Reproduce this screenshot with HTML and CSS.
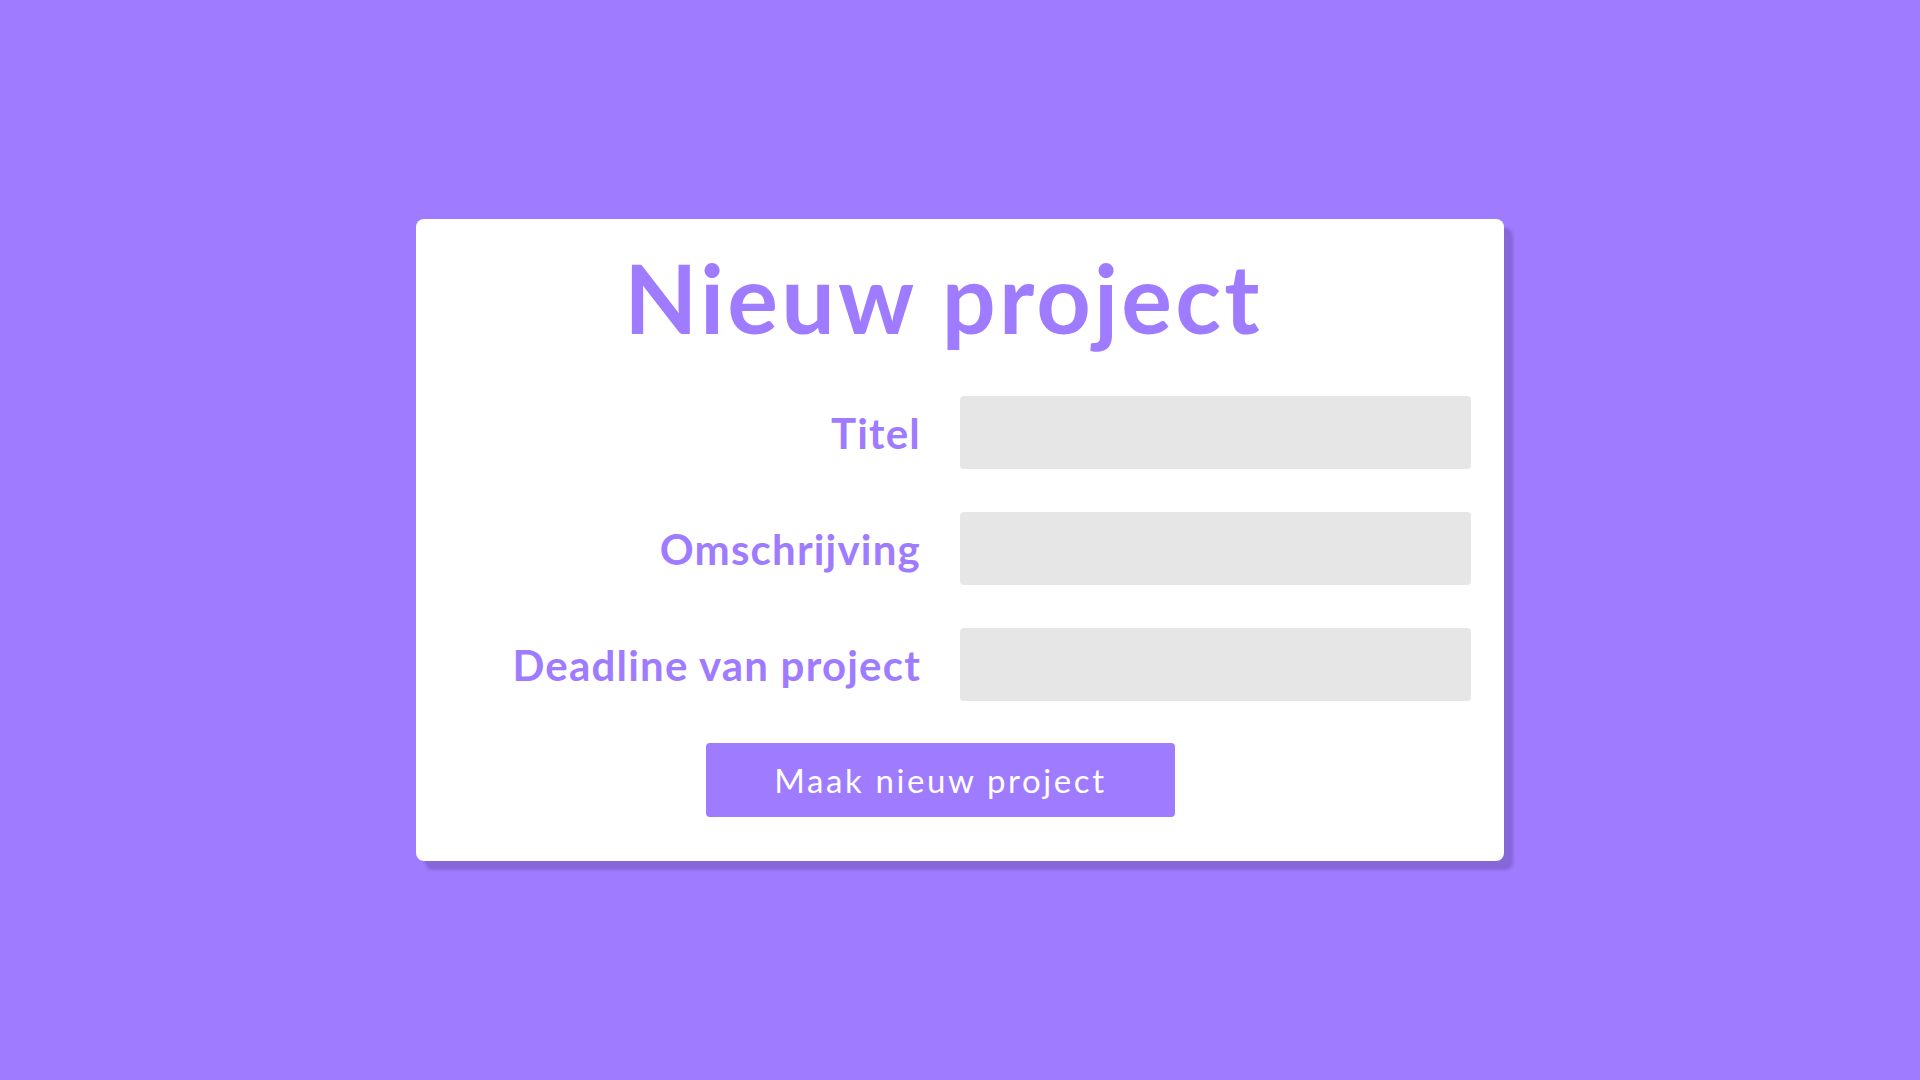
FILE: index.html
```html
<!DOCTYPE html>
<html lang="nl">
<head>
<meta charset="utf-8">
<title>Nieuw project</title>
<link rel="stylesheet" href="styles.css">
</head>
<body>
<main class="page">
  <form class="card">
    <h1 class="title">Nieuw project</h1>
    <div class="fields">
      <label class="label" for="titel">Titel</label>
      <input class="input" id="titel" type="text">
      <label class="label" for="omschrijving">Omschrijving</label>
      <input class="input" id="omschrijving" type="text">
      <label class="label" for="deadline">Deadline van project</label>
      <input class="input" id="deadline" type="text">
    </div>
    <button class="submit" type="button">Maak nieuw project</button>
  </form>
</main>
</body>
</html>
```

FILE: styles.css
```css
html, body {
  margin: 0;
  padding: 0;
  height: 100%;
}
body {
  background: #9e7bff;
  font-family: Lato, "Open Sans", sans-serif;
}
.page {
  height: 1080px;
  display: flex;
  justify-content: center;
  align-items: flex-start;
  padding-top: 219px;
  box-sizing: border-box;
}
.card {
  width: 1088px;
  height: 642px;
  box-sizing: border-box;
  background: #ffffff;
  border-radius: 8px;
  box-shadow: 9px 9px 3px #8567d9;
  padding: 31px 33px 43px 0;
  display: flex;
  flex-direction: column;
}
.title {
  margin: 0;
  text-align: center;
  font-size: 95px;
  line-height: 1;
  font-weight: 700;
  letter-spacing: 3.2px;
  color: #9e7bff;
}
.fields {
  margin-top: 51px;
  display: grid;
  grid-template-columns: 1fr 511px;
  column-gap: 40px;
  row-gap: 43px;
  align-items: center;
}
.label {
  text-align: right;
  font-size: 42px;
  font-weight: 700;
  letter-spacing: 1.2px;
  margin-right: -1px;
  color: #9e7bff;
}
.input {
  height: 73px;
  border: none;
  border-radius: 4px;
  background: #e6e6e6;
  margin: 0;
  padding: 0;
  outline: none;
}
.submit {
  margin: 42px 0 0 290px;
  width: 469px;
  height: 74px;
  border: none;
  border-radius: 4px;
  background: #9e7bff;
  color: #ffffff;
  font-family: Lato, "Open Sans", sans-serif;
  font-size: 33px;
  font-weight: 400;
  letter-spacing: 2.6px;
  padding: 0;
}
```
